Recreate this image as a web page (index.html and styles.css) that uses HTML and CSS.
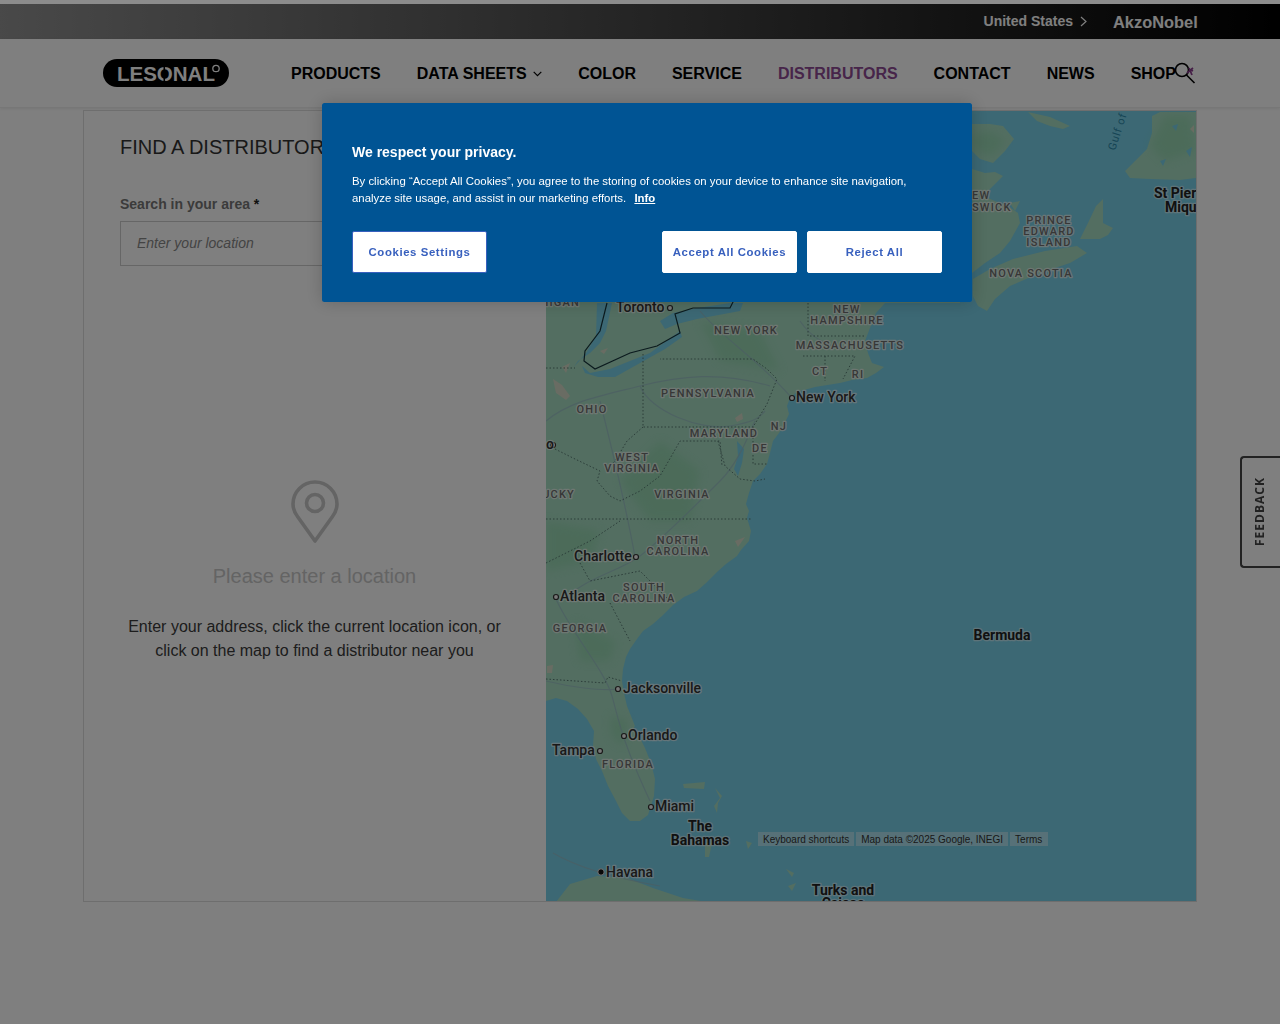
FILE: index.html
```html
<!DOCTYPE html>
<html lang="en">
<head>
    <meta charset="UTF-8">
    <meta name="viewport" content="width=device-width, initial-scale=1.0">
    <title>Find a distributor - Lesonal</title>
    <link rel="stylesheet" href="styles.css">
</head>
<body>
    <div class="top-strip"></div>

    <div class="top-bar">
        <div class="top-bar-inner">
            <span class="country">United States</span>
            <svg class="country-arrow" width="7" height="11" viewBox="0 0 7 11"><path d="M1 1l5 4.5L1 10" fill="none" stroke="#fff" stroke-width="1.2"/></svg>
            <span class="akzo">AkzoNobel</span>
        </div>
    </div>

    <header class="site-header">
        <div class="header-inner">
            <svg class="logo" width="126" height="28" viewBox="0 0 126 28">
                <rect width="126" height="28" rx="14" fill="#000"/>
                <text class="logo-text" x="14" y="21.5">LESONAL</text>
                <rect x="60.5" y="7" width="1.6" height="15" fill="#000"/>
                <circle cx="113" cy="9.500" r="3.200" fill="none" stroke="#fff" stroke-width="1.300"/>
            </svg>
            <nav class="main-nav">
                <a href="#">PRODUCTS</a>
                <a href="#" class="has-sub">DATA SHEETS
                    <svg width="9" height="6" viewBox="0 0 9 6"><path d="M.7.8l3.8 3.8L8.3.8" fill="none" stroke="#000" stroke-width="1.2"/></svg>
                </a>
                <a href="#">COLOR</a>
                <a href="#">SERVICE</a>
                <a href="#" class="active">DISTRIBUTORS</a>
                <a href="#">CONTACT</a>
                <a href="#">NEWS</a>
                <a href="#">SHOP</a>
            </nav>
            <svg class="search-icon" width="22" height="22" viewBox="0 0 22 22">
                <circle cx="8" cy="8" r="6.5" fill="none" stroke="#000" stroke-width="1.6"/>
                <path d="M12.5 13l8 8" stroke="#000" stroke-width="1.6"/>
                <path d="M13 11l6-5M15 6l3 7M19 9l-2-1" fill="none" stroke="#8a3f8f" stroke-width="1.8"/>
            </svg>
        </div>
    </header>

    <main class="locator">
        <section class="side-panel">
            <h1>FIND A DISTRIBUTOR</h1>
            <label for="location">Search in your area <span class="req">*</span></label>
            <input type="text" id="location" placeholder="Enter your location">
            <div class="empty-state">
                <svg width="48" height="64" viewBox="0 0 48 64">
                    <path d="M24 61L6.5 36.5C3.5 32.5 2 28 2 24 2 11.8 11.8 2 24 2s22 9.800 22 22c0 4-1.500 8.500-4.500 12.500z" fill="none" stroke="#c8c8c8" stroke-width="3.600" stroke-linejoin="round"/>
                    <circle cx="24" cy="23" r="8.500" fill="none" stroke="#c8c8c8" stroke-width="3.600"/>
                </svg>
                <h2>Please enter a location</h2>
                <p>Enter your address, click the current location icon, or click on the map to find a distributor near you</p>
            </div>
        </section>

        <section class="map">
            <svg class="map-svg" width="650" height="791" viewBox="546 110 650 791">
                <rect x="546" y="110" width="650" height="791" fill="#78d0e8"/>

                <!-- land -->
                <g class="land">
                    <path d="M546 110H960V302H885L876 312 870 327 865 340 868 352 872 362 884 366 876 372 867 377 852 379 840 382 815 386 797 391 790 397 787 405 789 413 782 428 773 440 770 452 767 463 760 473 753 480 749 492 746 503 749 510 747 517 751 530 749 540 741 549 737 555 726 563 717 571 706 582 697 590 684 596 673 604 662 615 653 623 643 630 637 638 630 648 626 656 623 668 622 680 624 692 627 705 633 720 638 733 645 747 651 762 655 778 654 795 648 814 640 820 630 820 622 812 616 800 608 785 602 770 596 758 593 745 594 730 587 718 578 708 567 700 556 697 546 700z"/>
                    <path d="M972 123L990 123 1003 125 1014 138 1005 150 993 162 980 158 972 150z"/>
                    <path d="M972 168L985 172 995 171 1003 175 993 185 983 195 995 200 1008 205 1018 212 1020 222 1010 240 1000 252 985 262 972 272z"/>
                    <path d="M973 278L990 268 1013 258 1045 250 1077 245 1087 252 1070 262 1040 272 1010 285 995 298 987 310 978 305 973 295z"/>
                    <path d="M1080 238L1088 222 1096 205 1103 198 1103 222 1113 227 1108 234 1100 238z"/>
                    <path d="M1010 202L1020 200 1015 210z"/>
                    <path d="M1028 111L1050 116 1070 125 1063 128 1050 125 1037 120z"/>
                    <path d="M1152 115L1160 111H1196V177L1180 179 1150 178 1130 177 1125 170 1135 160 1147 148 1152 132z"/>
                    <path d="M556 901L570 883 597 875 627 877 653 887 683 897 707 901z"/>
                    <path d="M683 783L705 781 704 788 684 787zM715 787L722 795 718 802 717 812 714 805 720 797z"/>
                    <path d="M705 842H712L709 856H705z"/>
                    <path d="M746 840L752 842 748 848zM788 885L796 882 792 890zM786 868L794 872 792 876z"/>
                </g>

                <!-- forest -->
                <g class="forest">
                    <path d="M660 440L700 470 690 520 650 520 620 480z"/>
                    <path d="M575 620L615 640 610 660 580 660z"/>
                    <path d="M610 715L628 720 622 745 612 735z"/>
                    <path d="M1165 115L1190 115 1196 150 1165 160 1150 145z"/>
                    <path d="M972 135L990 130 1005 140 992 155 975 148z"/>
                    <path d="M700 320L760 330 780 370 720 360z"/>
                    <path d="M546 520L600 530 590 560 546 570z"/>
                </g>

                <!-- towns -->
                <g fill="#e6d8c8" opacity=".7">
                    <path d="M553 378L562 384 570 395 566 399 556 392z"/>
                    <path d="M562 366L570 362 566 372z"/>
                    <path d="M600 350L608 347 604 353z"/>
                    <path d="M735 417L742 412 743 418 737 421z"/>
                    <path d="M735 540L745 536 738 546z"/>
                    <path d="M547 665L553 664 552 672 547 672z"/>
                    <path d="M1190 128L1194 124 1194 132z"/>
                </g>

                <!-- lakes -->
                <g class="water">
                    <path d="M597 302H612L606 330 600 342 590 352 578 360 574 366 586 352 596 335z"/>
                    <path d="M660 320L673 312 697 307 730 302H743L740 310 697 318 677 323 665 328z"/>
                    <path d="M582 365L590 372 610 368 630 360 650 352 680 330 682 336 665 348 640 362 615 376 598 376 585 372z"/>
                    <path d="M737 440L744 448 742 462 738 475 734 468 738 455z"/>
                    <path d="M634 726L640 722 639 735 634 736z"/>
                    <path d="M1172 125L1178 123 1176 130zM1186 150L1192 146 1190 156zM1160 160L1166 158 1163 165z"/>
                </g>

                <!-- roads -->
                <g class="roads">
                    <path d="M546 420C570 400 600 395 640 385S720 370 770 385"/>
                    <path d="M640 385C650 410 700 430 730 425S760 415 765 410"/>
                    <path d="M600 400C610 440 625 500 635 556"/>
                    <path d="M560 600C590 575 620 570 640 555S700 500 720 480 750 430 755 420"/>
                    <path d="M556 598C570 630 605 670 612 695S622 740 650 800"/>
                    <path d="M546 680C570 686 600 690 618 688"/>
                    <path d="M700 310C720 335 760 360 790 395"/>
                    <path d="M800 320C810 335 830 350 850 345"/>
                    <path d="M553 852C580 868 620 878 660 885"/>
                </g>

                <!-- state borders -->
                <g class="borders">
                    <path d="M643 353V426H753L767 403 777 378 767 368 753 358H660"/>
                    <path d="M546 367H575M555 448L575 458 600 470 597 480 610 495 620 500 640 490 660 475 680 440 720 440 722 465"/>
                    <path d="M643 426L627 440 615 460 605 470"/>
                    <path d="M546 518H752"/>
                    <path d="M546 562L590 540 620 520"/>
                    <path d="M580 562L590 580 640 570 670 600"/>
                    <path d="M610 602L630 640"/>
                    <path d="M546 678L605 682 608 676 622 680"/>
                    <path d="M808 302V335H866M825 355V380M803 355H855L843 378"/>
                    <path d="M753 426V463H768"/>
                    <path d="M718 440L725 465 740 478 755 480 765 478"/>
                </g>

                <!-- international border -->
                <path d="M607 302L600 330 585 350 584 360 595 368 630 352 657 345 680 332 675 313 693 307H730L735 297" fill="none" stroke="#16353c" stroke-width="1.200"/>

                <!-- places -->
                <g class="nudge">
                    <g class="dot">
                        <circle cx="670" cy="308" r="2.500"/>
                        <circle cx="792" cy="398" r="2.500"/>
                        <circle cx="636" cy="557" r="2.500"/>
                        <circle cx="556" cy="597" r="2.500"/>
                        <circle cx="618" cy="689" r="2.500"/>
                        <circle cx="624" cy="736" r="2.500"/>
                        <circle cx="600" cy="751" r="2.500"/>
                        <circle cx="651" cy="807" r="2.500"/>
                        <circle cx="553" cy="445" r="2.500"/>
                    </g>
                    <circle cx="601" cy="872" r="3.200" fill="#111" stroke="#eee" stroke-width="1"/>

                    <g class="state">
                        <text x="580" y="306" text-anchor="end">IIGAN</text>
                        <text x="746" y="334">NEW YORK</text>
                        <text x="847" y="313">NEW</text>
                        <text x="847" y="324">HAMPSHIRE</text>
                        <text x="850" y="349">MASSACHUSETTS</text>
                        <text x="820" y="375">CT</text>
                        <text x="858" y="378">RI</text>
                        <text x="708" y="397">PENNSYLVANIA</text>
                        <text x="592" y="413">OHIO</text>
                        <text x="724" y="437">MARYLAND</text>
                        <text x="779" y="430">NJ</text>
                        <text x="760" y="452">DE</text>
                        <text x="632" y="461">WEST</text>
                        <text x="632" y="472">VIRGINIA</text>
                        <text x="575" y="498" text-anchor="end">UCKY</text>
                        <text x="682" y="498">VIRGINIA</text>
                        <text x="678" y="544">NORTH</text>
                        <text x="678" y="555">CAROLINA</text>
                        <text x="644" y="591">SOUTH</text>
                        <text x="644" y="602">CAROLINA</text>
                        <text x="580" y="632">GEORGIA</text>
                        <text x="628" y="768">FLORIDA</text>
                        <text x="972" y="199" text-anchor="start">EW</text>
                        <text x="972" y="211" text-anchor="start">SWICK</text>
                        <text x="1049" y="224">PRINCE</text>
                        <text x="1049" y="235">EDWARD</text>
                        <text x="1049" y="246">ISLAND</text>
                        <text x="1031" y="277">NOVA SCOTIA</text>
                    </g>

                    <g class="city">
                        <text x="616" y="312">Toronto</text>
                        <text x="796" y="402">New York</text>
                        <text x="574" y="561">Charlotte</text>
                        <text x="560" y="601">Atlanta</text>
                        <text x="623" y="693">Jacksonville</text>
                        <text x="628" y="740">Orlando</text>
                        <text x="552" y="755">Tampa</text>
                        <text x="655" y="811">Miami</text>
                        <text x="606" y="877">Havana</text>
                        <text x="546" y="449">o</text>
                    </g>

                    <g class="region">
                        <text x="700" y="831" text-anchor="middle">The</text>
                        <text x="700" y="845" text-anchor="middle">Bahamas</text>
                        <text x="1002" y="640" text-anchor="middle">Bermuda</text>
                        <text x="843" y="895" text-anchor="middle">Turks and</text>
                        <text x="843" y="908" text-anchor="middle">Caicos</text>
                        <text x="1154" y="198">St Pierre</text>
                        <text x="1165" y="212">Miquelon</text>
                    </g>
                </g>

                <text class="gulf" transform="translate(1115 150) rotate(-72)">Gulf of St</text>
            </svg>
            <div class="map-credits">
                <span>Keyboard shortcuts</span>
                <span>Map data ©2025 Google, INEGI</span>
                <span>Terms</span>
            </div>
        </section>
    </main>

    <a href="#" class="feedback-tab">FEEDBACK</a>

    <div class="cookie-overlay"></div>
    <div class="cookie-box">
        <h3>We respect your privacy.</h3>
        <p>By clicking “Accept All Cookies”, you agree to the storing of cookies on your device to enhance site navigation, analyze site usage, and assist in our marketing efforts. <a href="#">Info</a></p>
        <div class="cookie-buttons">
            <button class="btn-settings">Cookies Settings</button>
            <div class="cookie-actions">
                <button>Accept All Cookies</button>
                <button>Reject All</button>
            </div>
        </div>
    </div>
</body>
</html>
```

FILE: styles.css
```css
body {
    margin: 0;
    padding: 0;
    font-family: "Liberation Sans", Arial, sans-serif;
    background-color: #fff;
    height: 1024px;
    overflow: hidden;
}

.top-strip {
    position: relative;
    z-index: 20;
    height: 4px;
    background-color: #8c8c8c;
}

.top-bar {
    height: 35px;
    background: linear-gradient(90deg, #929292, #000);
}

.top-bar-inner {
    display: flex;
    align-items: center;
    justify-content: flex-end;
    height: 34px;
    padding-right: 83px;
}

.country {
    color: #fff;
    font-size: 14px;
    font-weight: bold;
}

.country-arrow {
    margin-left: 7px;
}

.akzo {
    margin-left: 26px;
    margin-top: 3px;
    width: 84px;
    color: #fff;
    font-size: 16.400px;
    font-weight: bold;
    white-space: nowrap;
}

.site-header {
    height: 68px;
    border-bottom: 1px solid #eee;
    box-shadow: 0 1px 3px rgba(0, 0, 0, 0.08);
}

.header-inner {
    position: relative;
    display: flex;
    align-items: center;
    height: 68px;
    padding-left: 103px;
}

.logo {
    flex: none;
    margin-right: 62px;
}

.logo-text {
    font-family: "Liberation Sans", Arial, sans-serif;
    font-size: 20.5px;
    font-weight: bold;
    fill: #fff;
}

.main-nav {
    display: flex;
    gap: 36px;
    align-items: center;
    margin-top: 2px;
}

.main-nav a {
    color: #000;
    font-size: 16px;
    font-weight: bold;
    text-decoration: none;
    white-space: nowrap;
}

.main-nav a.active {
    color: #8e4a94;
}

.has-sub svg {
    margin-left: 2px;
    vertical-align: 2px;
}

.search-icon {
    position: absolute;
    left: 1174px;
    top: 23px;
}

.locator {
    display: flex;
    height: 792px;
    margin: 2px 83px 0;
    border: 1px solid #ddd;
    border-right: none;
    box-sizing: border-box;
}

.side-panel {
    flex: none;
    width: 462px;
    box-sizing: border-box;
    padding: 24px 37px 0 36px;
}

.side-panel h1 {
    margin: 0 0 37px;
    color: #333;
    font-size: 20px;
    font-weight: normal;
    line-height: 24px;
    white-space: nowrap;
}

.side-panel label {
    display: block;
    margin-bottom: 8px;
    color: #777;
    font-size: 14px;
    font-weight: bold;
    line-height: 17px;
}

.req {
    color: #222;
}

.side-panel input {
    display: block;
    width: 100%;
    height: 45px;
    box-sizing: border-box;
    padding: 0 16px 2px;
    border: 1px solid #ccc;
    background: none;
    font-family: inherit;
    font-size: 14px;
}

.side-panel input::placeholder {
    color: #888;
    font-style: italic;
    opacity: 1;
}

.empty-state {
    margin-top: 214px;
    text-align: center;
}

.empty-state svg {
    display: block;
    margin: 0 auto;
}

.empty-state h2 {
    margin: 19px 0 26px;
    color: #c8c8c8;
    font-size: 20px;
    font-weight: normal;
    line-height: 26px;
}

.empty-state p {
    margin: 0;
    color: #3a3a3a;
    font-size: 16px;
    line-height: 24px;
}

.map {
    position: relative;
    flex: 1;
    overflow: hidden;
    border-right: 1px solid #ddd;
}

.map-svg {
    display: block;
}

.map-svg text {
    font-family: Roboto, sans-serif;
    paint-order: stroke;
    stroke-linejoin: round;
}

.land {
    fill: #a6dcc2;
    filter: blur(0.5px);
}

.forest {
    fill: #8fd4aa;
    opacity: 0.6;
    filter: blur(4px);
}

.water {
    fill: #78d0e8;
    filter: blur(0.4px);
}

.roads {
    fill: none;
    stroke: #98bcc6;
    stroke-width: 1.2;
    opacity: 0.7;
}

.borders {
    fill: none;
    stroke: #4f6f6a;
    stroke-width: 0.9;
    stroke-dasharray: 1.5 2;
}

.nudge {
    transform: translateY(-1px);
}

.dot circle {
    fill: #eee;
    stroke: #333;
    stroke-width: 1.2;
}

.state text {
    font-size: 11px;
    font-weight: 500;
    letter-spacing: 1.2px;
    text-anchor: middle;
    fill: #6f6f6f;
    stroke: #eef5f0;
    stroke-width: 2.5px;
    stroke-opacity: 0.75;
}

.state text[text-anchor="end"] {
    text-anchor: end;
}

.state text[text-anchor="start"] {
    text-anchor: start;
}

.city text {
    font-size: 14px;
    font-weight: 500;
    fill: #333;
    stroke: #fff;
    stroke-width: 2.5px;
    stroke-opacity: 0.6;
}

.region text {
    font-size: 14px;
    font-weight: 700;
    fill: #222;
    stroke: #fff;
    stroke-width: 2.5px;
    stroke-opacity: 0.5;
}

.gulf {
    font-size: 11px;
    letter-spacing: 0.8px;
    fill: #2c8aa8;
}

.map-credits {
    position: absolute;
    left: 212px;
    top: 721px;
    display: flex;
    gap: 2px;
    height: 14px;
    font-size: 10px;
    line-height: 15px;
    color: #333;
    white-space: nowrap;
}

.map-credits span {
    padding: 0 5px;
    background-color: rgba(255, 255, 255, 0.4);
}

.map-credits span:last-child {
    padding-right: 6px;
}

.feedback-tab {
    position: absolute;
    right: 0;
    top: 456px;
    display: flex;
    align-items: center;
    justify-content: center;
    width: 40px;
    height: 112px;
    box-sizing: border-box;
    padding-left: 3px;
    border: 2px solid #444;
    border-left: none;
    border-radius: 0 4px 4px 0;
    color: #444;
    font-family: "Open Sans", sans-serif;
    font-size: 12px;
    font-weight: 700;
    letter-spacing: 1px;
    text-decoration: none;
    writing-mode: vertical-rl;
    transform: rotate(180deg);
    transform-origin: center;
}

.cookie-overlay {
    position: fixed;
    top: 0;
    right: 0;
    bottom: 0;
    left: 0;
    z-index: 10;
    background-color: rgba(0, 0, 0, 0.5);
}

.cookie-box {
    position: fixed;
    left: 322px;
    top: 103px;
    z-index: 30;
    width: 650px;
    height: 199px;
    box-sizing: border-box;
    padding: 40px 30px 0;
    border-radius: 2.500px;
    background-color: #005494;
    box-shadow: 0 0 18px rgba(0, 0, 0, 0.2);
    color: #fff;
}

.cookie-box h3 {
    margin: 0 0 12px;
    font-size: 14px;
    font-weight: bold;
    line-height: 18px;
}

.cookie-box p {
    margin: 0 0 24px;
    font-size: 11.380px;
    line-height: 17px;
}

.cookie-box p a {
    margin-left: 5px;
    color: #fff;
    font-weight: bold;
}

.cookie-buttons {
    display: flex;
    justify-content: space-between;
}

.cookie-actions {
    display: flex;
    gap: 10px;
}

.cookie-buttons button {
    width: 135px;
    height: 42px;
    padding: 0;
    border: 1px solid #fff;
    border-radius: 2px;
    background-color: #fff;
    color: #3860be;
    font-family: inherit;
    font-size: 11.380px;
    font-weight: bold;
    letter-spacing: 0.6px;
}

.cookie-buttons .btn-settings {
    border-color: #3860be;
}
```
